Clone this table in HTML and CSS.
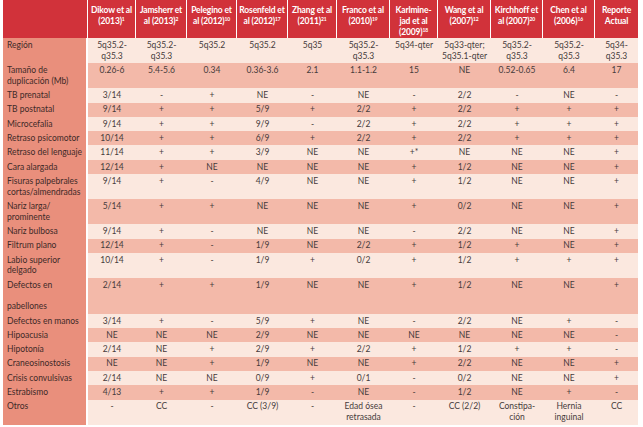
FILE: index.html
```html
<!DOCTYPE html>
<html lang="es">
<head>
<meta charset="utf-8">
<link rel="stylesheet" href="styles.css">
</head>
<body>
<table class="tbl">
<colgroup>
<col class="c0"><col class="c1"><col class="c2"><col class="c3"><col class="c4"><col class="c5"><col class="c6"><col class="c7"><col class="c8"><col class="c9"><col class="c10"><col class="c11">
</colgroup>
<thead>
<tr>
<th></th>
<th>Dikow et al<br>(2013)<sup>1</sup></th>
<th>Jamsherr et<br>al (2013)<sup>2</sup></th>
<th>Pelegino et<br>al (2012)<sup>10</sup></th>
<th>Rosenfeld et<br>al (2012)<sup>17</sup></th>
<th>Zhang et al<br>(2011)<sup>21</sup></th>
<th>Franco et al<br>(2010)<sup>19</sup></th>
<th>Karlmine-<br>jad et al<br>(2009)<sup>18</sup></th>
<th>Wang et al<br>(2007)<sup>12</sup></th>
<th>Kirchhoff et<br>al (2007)<sup>20</sup></th>
<th>Chen et al<br>(2006)<sup>16</sup></th>
<th>Reporte<br>Actual</th>
</tr>
</thead>
<tbody>
<tr><td>Región</td><td>5q35.2-<br>q35.3</td><td>5q35.2-<br>q35.3</td><td>5q35.2</td><td>5q35.2</td><td>5q35</td><td>5q35.2-<br>q35.3</td><td>5q34-qter</td><td>5q33-qter;<br>5q35.1-qter</td><td>5q35.2-<br>q35.3</td><td>5q35.2-<br>q35.3</td><td>5q34-<br>q35.3</td></tr>
<tr><td>Tamaño de<br>duplicación (Mb)</td><td>0.26-6</td><td>5.4-5.6</td><td>0.34</td><td>0.36-3.6</td><td>2.1</td><td>1.1-1.2</td><td>15</td><td>NE</td><td>0.52-0.65</td><td>6.4</td><td>17</td></tr>
<tr><td>TB prenatal</td><td>3/14</td><td>-</td><td>+</td><td>NE</td><td>-</td><td>NE</td><td>-</td><td>2/2</td><td>-</td><td>NE</td><td>-</td></tr>
<tr><td>TB postnatal</td><td>9/14</td><td>+</td><td>+</td><td>5/9</td><td>+</td><td>2/2</td><td>+</td><td>2/2</td><td>+</td><td>+</td><td>+</td></tr>
<tr><td>Microcefalia</td><td>9/14</td><td>+</td><td>+</td><td>9/9</td><td>-</td><td>2/2</td><td>+</td><td>2/2</td><td>+</td><td>+</td><td>+</td></tr>
<tr><td>Retraso psicomotor</td><td>10/14</td><td>+</td><td>+</td><td>6/9</td><td>+</td><td>2/2</td><td>+</td><td>2/2</td><td>+</td><td>+</td><td>+</td></tr>
<tr><td>Retraso del lenguaje</td><td>11/14</td><td>+</td><td>+</td><td>3/9</td><td>NE</td><td>NE</td><td>+*</td><td>NE</td><td>NE</td><td>NE</td><td>+</td></tr>
<tr><td>Cara alargada</td><td>12/14</td><td>+</td><td>NE</td><td>NE</td><td>NE</td><td>NE</td><td>+</td><td>1/2</td><td>NE</td><td>NE</td><td>+</td></tr>
<tr><td>Fisuras palpebrales<br>cortas/almendradas</td><td>9/14</td><td>+</td><td>-</td><td>4/9</td><td>NE</td><td>NE</td><td>+</td><td>1/2</td><td>NE</td><td>NE</td><td>+</td></tr>
<tr><td>Nariz larga/<br>prominente</td><td>5/14</td><td>+</td><td>+</td><td>NE</td><td>NE</td><td>NE</td><td>+</td><td>0/2</td><td>NE</td><td>NE</td><td>+</td></tr>
<tr><td>Nariz bulbosa</td><td>9/14</td><td>+</td><td>-</td><td>NE</td><td>NE</td><td>NE</td><td>-</td><td>2/2</td><td>NE</td><td>NE</td><td>+</td></tr>
<tr><td>Filtrum plano</td><td>12/14</td><td>+</td><td>-</td><td>1/9</td><td>NE</td><td>2/2</td><td>+</td><td>1/2</td><td>+</td><td>NE</td><td>+</td></tr>
<tr><td>Labio superior<br>delgado</td><td>10/14</td><td>+</td><td>-</td><td>1/9</td><td>+</td><td>0/2</td><td>+</td><td>1/2</td><td>+</td><td>+</td><td>+</td></tr>
<tr><td>Defectos en<br><br>pabellones</td><td>2/14</td><td>+</td><td>+</td><td>1/9</td><td>NE</td><td>NE</td><td>+</td><td>1/2</td><td>NE</td><td>NE</td><td>+</td></tr>
<tr><td>Defectos en manos</td><td>3/14</td><td>+</td><td>-</td><td>5/9</td><td>+</td><td>NE</td><td>-</td><td>2/2</td><td>NE</td><td>+</td><td>-</td></tr>
<tr><td>Hipoacusia</td><td>NE</td><td>NE</td><td>NE</td><td>2/9</td><td>NE</td><td>NE</td><td>NE</td><td>NE</td><td>NE</td><td>NE</td><td>-</td></tr>
<tr><td>Hipotonía</td><td>2/14</td><td>NE</td><td>+</td><td>2/9</td><td>+</td><td>2/2</td><td>+</td><td>1/2</td><td>+</td><td>+</td><td>-</td></tr>
<tr><td>Craneosinostosis</td><td>NE</td><td>NE</td><td>+</td><td>1/9</td><td>NE</td><td>NE</td><td>+</td><td>2/2</td><td>NE</td><td>NE</td><td>+</td></tr>
<tr><td>Crisis convulsivas</td><td>2/14</td><td>NE</td><td>NE</td><td>0/9</td><td>+</td><td>0/1</td><td>-</td><td>0/2</td><td>NE</td><td>NE</td><td>+</td></tr>
<tr><td>Estrabismo</td><td>4/13</td><td>+</td><td>+</td><td>1/9</td><td>-</td><td>NE</td><td>-</td><td>1/2</td><td>NE</td><td>+</td><td>-</td></tr>
<tr><td>Otros</td><td>-</td><td>CC</td><td>-</td><td>CC (3/9)</td><td>-</td><td>Edad ósea<br>retrasada</td><td>-</td><td>CC (2/2)</td><td>Constipa-<br>ción</td><td>Hernia<br>inguinal</td><td>CC</td></tr>
</tbody>
</table>
</body>
</html>
```

FILE: styles.css
```css
html, body {
  margin: 0;
  padding: 0;
  background: #ffffff;
}

body {
  padding-left: 3px;
  font-family: Lato, "Open Sans", sans-serif;
  font-size: 8.5px;
  color: #463b3b;
}

.tbl {
  border-collapse: separate;
  border-spacing: 0;
  table-layout: fixed;
  width: 635px;
}

.c0 { width: 85px; }
.c1 { width: 48px; }
.c2 { width: 51px; }
.c3 { width: 50px; }
.c4 { width: 51px; }
.c5 { width: 49px; }
.c6 { width: 53px; }
.c7 { width: 48px; }
.c8 { width: 53px; }
.c9 { width: 52px; }
.c10 { width: 52px; }
.c11 { width: 43px; }

.tbl th {
  background: #d1323a;
  color: #ffffff;
  font-weight: 700;
  font-size: 8.5px;
  letter-spacing: -0.15px;
  line-height: 11.2px;
  height: 38px;
  padding: 4.5px 0 0;
  vertical-align: top;
  text-align: center;
  white-space: nowrap;
  border-right: 1.5px solid #ffffff;
  box-sizing: border-box;
}

.tbl th:last-child {
  border-right: 0;
}

.tbl th sup {
  font-size: 5px;
  line-height: 0;
  vertical-align: 3px;
}

.tbl td {
  line-height: 10.8px;
  padding: 1.75px 1px 1.75px;
  text-align: center;
  vertical-align: top;
  white-space: nowrap;
}

.tbl td:first-child {
  text-align: left;
  padding-left: 4px;
  border-right: 2px solid #ffffff;
  color: #3e2a28;
}

.tbl tbody tr:nth-child(odd) td {
  background: #fbe8df;
}

.tbl tbody tr:nth-child(even) td {
  background: #f3b9a9;
}

.tbl tbody tr td:first-child {
  background: #e98f7c;
}
```
